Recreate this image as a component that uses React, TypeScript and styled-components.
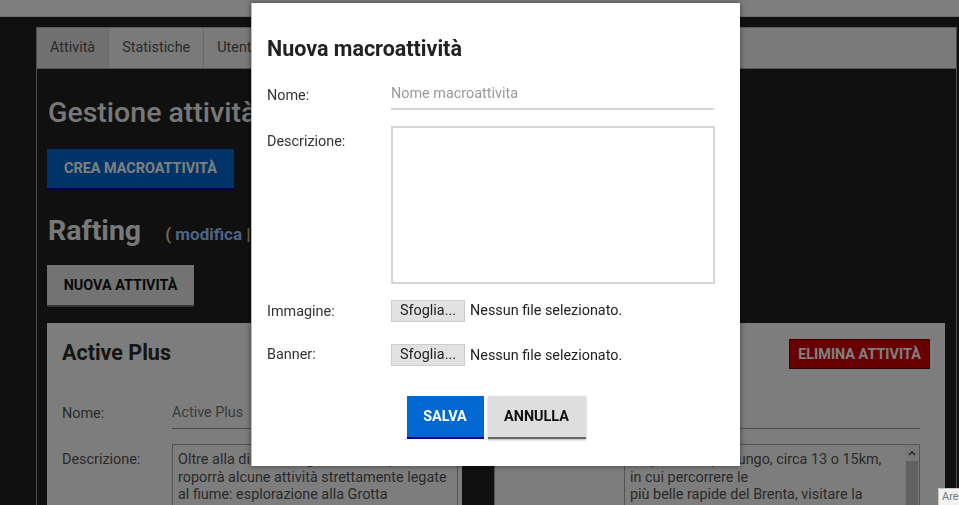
import React from 'react';
import styled, { createGlobalStyle } from 'styled-components';

const Global = createGlobalStyle`
  html, body { margin: 0; padding: 0; height: 100%; overflow: hidden; }
  body { background: #202020; font-family: Roboto, "Liberation Sans", Arial, sans-serif; }
  * { box-sizing: border-box; }
`;

const TopBar = styled.div`
  height: 17px;
  background: #fcfcfc;
  border-bottom: 1px solid #d8d8d8;
`;

const Main = styled.div`
  padding: 10px 2px 0 36px;
`;

const Container = styled.div`
  border-left: 1px solid #9a9a9a;
  border-right: 1px solid #9a9a9a;
  background: #202020;
  height: 600px;
`;

const Tabs = styled.div`
  display: flex;
  height: 42px;
  background: #f4f4f4;
  border-top: 1px solid #bbb;
  border-bottom: 1px solid #a8a8a8;
`;

const Tab = styled.div<{ $active?: boolean }>`
  padding: 0 13px;
  line-height: 40px;
  font-size: 14.4px;
  color: #555;
  border-right: 1px solid #d2d2d2;
  background: ${(p) => (p.$active ? '#e0e0e0' : 'transparent')};
`;

const Content = styled.div`
  padding: 29px 11px 0 10px;
`;

const PageTitle = styled.h1`
  margin: 0 0 0 1px;
  font-size: 28.5px;
  line-height: 30px;
  font-weight: 500;
  color: #f0f0f0;
`;

const Button = styled.button<{ $variant: 'blue' | 'grey' | 'red' }>`
  display: block;
  border: none;
  font-family: inherit;
  font-size: 14.4px;
  font-weight: 700;
  text-transform: uppercase;
  cursor: pointer;
  ${(p) =>
    p.$variant === 'blue'
      ? `background:#0068d0; color:#fff; border-bottom:2px solid #0000a0;`
      : p.$variant === 'grey'
      ? `background:#e6e6e6; color:#111; border-bottom:2px solid #666; box-shadow: 0 1px 2px rgba(0,0,0,0.3);`
      : `background:#cf0000; color:#fff; border:1px solid #800000;`}
`;

const CreateButton = styled(Button)`
  margin-top: 21px;
  height: 41px;
  padding: 0;
  width: 187px;
`;

const SectionRow = styled.div`
  display: flex;
  align-items: baseline;
  margin-top: 25px;
`;

const SectionTitle = styled.h2`
  margin: 0 0 0 1px;
  font-size: 28.5px;
  line-height: 32px;
  font-weight: 700;
  color: #f0f0f0;
`;

const EditLink = styled.span`
  margin-left: 24px;
  font-size: 17px;
  font-weight: 700;
  color: #e8cc9c;
  white-space: nowrap;
  & > a { color: #9cc8ff; text-decoration: none; }
`;

const NewButton = styled(Button)`
  margin-top: 18px;
  height: 42px;
  width: 147px;
  padding: 0;
`;

const Card = styled.div`
  margin-top: 16px;
  background: #fafafa;
  padding: 16px 15px 0 15px;
  height: 300px;
`;

const CardHeader = styled.div`
  display: flex;
  justify-content: space-between;
  align-items: flex-start;
`;

const CardTitle = styled.h3`
  margin: 0;
  font-size: 21.5px;
  line-height: 27px;
  font-weight: 700;
  color: #2a2a2a;
`;

const DeleteButton = styled(Button)`
  height: 30px;
  width: 141px;
  padding: 0;
`;

const CardBody = styled.div`
  display: flex;
  margin-top: 29px;
`;

const Column = styled.div<{ $w: number }>`
  width: ${(p) => p.$w}px;
  flex: none;
  display: flex;
  flex-direction: column;
  gap: 15px;
`;

const ColumnDivider = styled.div`
  width: 33px;
  flex: none;
  margin: 46px 19px 0 4px;
  background: #202020;
  border-right: 1px solid #aaa;
  height: 200px;
`;

const FieldRow = styled.div`
  display: flex;
`;

const FieldLabel = styled.div`
  width: 110px;
  flex: none;
  font-size: 14.4px;
  line-height: 31px;
  color: #555;
`;

const LineInput = styled.div`
  flex: 1;
  height: 31px;
  line-height: 30px;
  font-size: 14.4px;
  color: #777;
  border-bottom: 1px solid #9a9a9a;
`;

const TextBox = styled.div`
  flex: 1;
  display: flex;
  height: 130px;
  border: 1px solid #a8a8a8;
  background: #fafafa;
`;

const TextBoxText = styled.div`
  flex: 1;
  padding: 6px 5px;
  font-size: 14.4px;
  line-height: 17.5px;
  color: #555;
  white-space: pre;
  overflow: hidden;
`;

const ScrollBar = styled.div`
  width: 14px;
  flex: none;
  display: flex;
  flex-direction: column;
  background: #f0f0f0;
`;

const ScrollArrow = styled.div`
  height: 16px;
  display: flex;
  align-items: center;
  justify-content: center;
`;

const ScrollThumb = styled.div`
  flex: 1;
  margin: 0 1px;
  background: #c4c4c4;
`;

const Overlay = styled.div`
  position: fixed;
  inset: 0;
  background: rgba(0, 0, 0, 0.5);
`;

const Modal = styled.div`
  position: fixed;
  top: 3px;
  left: 251px;
  width: 489px;
  height: 463px;
  background: #fff;
  border-left: 1px solid #bbb;
  box-shadow: 0 0 6px rgba(0, 0, 0, 0.5);
  padding: 0 15px 0 15px;
  display: flex;
  flex-direction: column;
`;

const ModalTitle = styled.h2`
  margin: 33px 0 0 0;
  font-size: 21.5px;
  line-height: 25px;
  font-weight: 700;
  color: #222;
`;

const ModalRow = styled.div<{ $mt: number }>`
  display: flex;
  margin-top: ${(p) => p.$mt}px;
`;

const ModalLabel = styled.div<{ $pt?: number; $lh?: number }>`
  width: 124px;
  flex: none;
  padding-top: ${(p) => p.$pt ?? 0}px;
  font-size: 14.4px;
  line-height: ${(p) => p.$lh ?? 30}px;
  color: #333;
`;

const ModalInput = styled.div`
  width: 323px;
  height: 30px;
  line-height: 28px;
  font-size: 14.4px;
  color: #999;
  border-bottom: 2px solid #d4d4d4;
`;

const ModalTextArea = styled.div`
  width: 324px;
  height: 158px;
  border: 2px solid #d6d6d6;
`;

const FileField = styled.div`
  display: flex;
  align-items: center;
  gap: 5px;
  font-size: 14.4px;
  color: #222;
`;

const FileButton = styled.div`
  height: 22px;
  width: 74px;
  line-height: 20px;
  text-align: center;
  background: #e2e2e2;
  border: 1px solid #cdcdcd;
  font-size: 14.4px;
  color: #222;
`;

const Actions = styled.div`
  display: flex;
  justify-content: center;
  gap: 4px;
  margin-top: 30px;
`;

const SaveButton = styled(Button)`
  height: 43px;
  width: 77px;
  padding: 0;
`;

const CancelButton = styled(Button)`
  height: 43px;
  width: 98px;
  padding: 0;
  background: #dedede;
`;

const StatusTip = styled.div`
  position: fixed;
  right: 0;
  bottom: 0;
  width: 21px;
  height: 17px;
  padding-left: 3px;
  background: #f2f2f2;
  border: 1px solid #c8c8c8;
  border-right: none;
  border-bottom: none;
  font-size: 11px;
  line-height: 16px;
  color: #777;
  overflow: hidden;
  white-space: nowrap;
`;

export default function App() {
  return (
    <>
      <Global />
      <TopBar />
      <Main>
        <Container>
          <Tabs>
            <Tab $active>Attività</Tab>
            <Tab>Statistiche</Tab>
            <Tab>Utenti</Tab>
          </Tabs>
          <Content>
            <PageTitle>Gestione attività</PageTitle>
            <CreateButton $variant="blue">Crea macroattività</CreateButton>
            <SectionRow>
              <SectionTitle>Rafting</SectionTitle>
              <EditLink>
                ( <a href="#">modifica</a> | elimina )
              </EditLink>
            </SectionRow>
            <NewButton $variant="grey">Nuova attività</NewButton>
            <Card>
              <CardHeader>
                <CardTitle>Active Plus</CardTitle>
                <DeleteButton $variant="red">Elimina attività</DeleteButton>
              </CardHeader>
              <CardBody>
                <Column $w={396}>
                  <FieldRow>
                    <FieldLabel>Nome:</FieldLabel>
                    <LineInput>Active Plus</LineInput>
                  </FieldRow>
                  <FieldRow>
                    <FieldLabel>Descrizione:</FieldLabel>
                    <TextBox>
                      <TextBoxText>
                        {'Oltre alla discesa in gommone, il p\nroporrà alcune attività strettamente legate\nal fiume: esplorazione alla Grotta\ndi Oliero.'}
                      </TextBoxText>
                    </TextBox>
                  </FieldRow>
                </Column>
                <ColumnDivider />
                <Column $w={406}>
                  <FieldRow>
                    <FieldLabel>Nome:</FieldLabel>
                    <LineInput>Rafting Classico</LineInput>
                  </FieldRow>
                  <FieldRow>
                    <FieldLabel>Descrizione:</FieldLabel>
                    <TextBox>
                      <TextBoxText>
                        {'Un percorso più lungo, circa 13 o 15km,\nin cui percorrere le\npiù belle rapide del Brenta, visitare la\nGrotta di Oliero.'}
                      </TextBoxText>
                      <ScrollBar>
                        <ScrollArrow>
                          <svg width="8" height="6" viewBox="0 0 8 6">
                            <path d="M1 5 L4 2 L7 5" stroke="#505050" strokeWidth="1.6" fill="none" />
                          </svg>
                        </ScrollArrow>
                        <ScrollThumb />
                      </ScrollBar>
                    </TextBox>
                  </FieldRow>
                </Column>
              </CardBody>
            </Card>
          </Content>
        </Container>
      </Main>
      <Overlay />
      <Modal>
        <ModalTitle>Nuova macroattività</ModalTitle>
        <ModalRow $mt={19}>
          <ModalLabel $pt={1}>Nome:</ModalLabel>
          <ModalInput>Nome macroattivita</ModalInput>
        </ModalRow>
        <ModalRow $mt={15}>
          <ModalLabel $pt={1}>Descrizione:</ModalLabel>
          <ModalTextArea />
        </ModalRow>
        <ModalRow $mt={14}>
          <ModalLabel $pt={3} $lh={22}>Immagine:</ModalLabel>
          <FileField>
            <FileButton>Sfoglia...</FileButton>
            Nessun file selezionato.
          </FileField>
        </ModalRow>
        <ModalRow $mt={21}>
          <ModalLabel $pt={0} $lh={22}>Banner:</ModalLabel>
          <FileField>
            <FileButton>Sfoglia...</FileButton>
            Nessun file selezionato.
          </FileField>
        </ModalRow>
        <Actions>
          <SaveButton $variant="blue">Salva</SaveButton>
          <CancelButton $variant="grey">Annulla</CancelButton>
        </Actions>
      </Modal>
      <StatusTip>Are</StatusTip>
    </>
  );
}
